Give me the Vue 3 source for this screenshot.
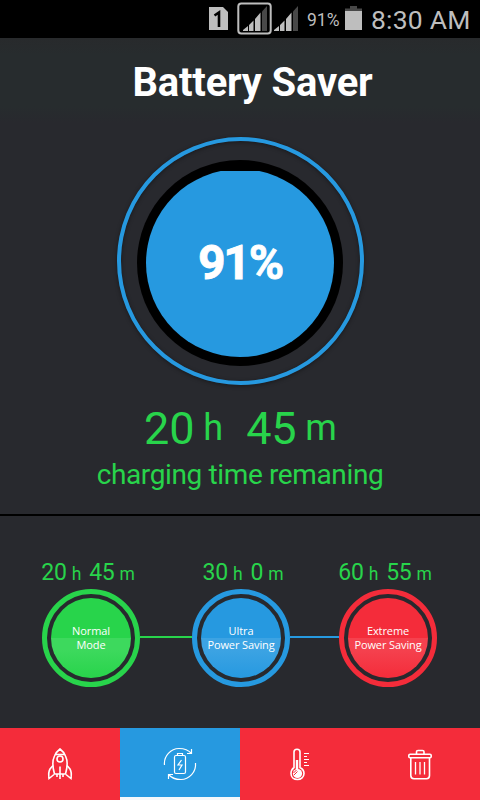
<script setup>
import { ref } from 'vue'

const level = ref(91)
const activeTab = ref('battery')

const modes = [
  { id: 'normal', hours: 20, minutes: 45, lines: ['Normal', 'Mode'] },
  { id: 'ultra', hours: 30, minutes: 0, lines: ['Ultra', 'Power Saving'] },
  { id: 'extreme', hours: 60, minutes: 55, lines: ['Extreme', 'Power Saving'] }
]

const tabs = ['boost', 'battery', 'cooler', 'junk']
</script>

<template>
  <div class="screen">
    <div class="status-bar">
      <svg class="status-icons" width="95" height="38" viewBox="0 0 95 38">
        <path d="M4 7H18L23 12V30H4Z" fill="#bebebe" />
        <path d="M9.500 15.500L14 12.500V27" fill="none" stroke="#000" stroke-width="2.600" />
        <rect x="33.300" y="3.500" width="32.400" height="30" rx="3" fill="none" stroke="#bebebe" stroke-width="2" />
        <g v-for="x in [38, 69]" :key="x" :transform="`translate(${x} 0)`">
          <path d="M0 31V30L5 26V31ZM6 25L10.500 20.500V31H6ZM12 19L17.500 12.500V31H12Z" fill="#bebebe" />
          <path d="M19 11.500L24 6V31H19Z" fill="#484848" />
        </g>
      </svg>
      <span class="status-level">{{ level }}%</span>
      <svg class="status-battery" width="17" height="38" viewBox="0 0 17 38">
        <path d="M5 6H12V8.500H17V12H0V8.500H5Z" fill="#484848" />
        <rect y="11" width="17" height="19" fill="#bebebe" />
      </svg>
      <span class="status-time">8:30 AM</span>
    </div>

    <header class="title-bar">
      <h1>Battery Saver</h1>
    </header>

    <main class="gauge">
      <div class="gauge-ring">
        <div class="gauge-well">
          <div class="gauge-fill">
            <span>{{ level }}%</span>
          </div>
        </div>
      </div>
      <div class="time-big">
        <span class="num">20</span><span class="unit unit-h">h</span>
        <span class="num num-min">45</span><span class="unit unit-m">m</span>
      </div>
      <p class="time-caption">charging time remaning</p>
    </main>

    <section class="modes">
      <template v-for="(mode, i) in modes" :key="mode.id">
        <div v-if="i > 0" class="link" :class="'link-' + modes[i - 1].id"></div>
        <div class="mode" :class="mode.id">
          <div class="mode-time">
            <span>{{ mode.hours }}</span><small class="small-h">h</small>
            <span>{{ mode.minutes }}</span><small>m</small>
          </div>
          <button class="mode-button">
            <span class="mode-disc">
              <span v-for="line in mode.lines" :key="line">{{ line }}</span>
            </span>
          </button>
        </div>
      </template>
    </section>

    <nav class="tabs">
      <button
        v-for="tab in tabs"
        :key="tab"
        class="tab"
        :class="{ active: activeTab === tab }"
        @click="activeTab = tab"
      >
        <svg v-if="tab === 'boost'" width="34" height="34" viewBox="0 0 34 34">
          <path d="M11.500 27C9.500 20 9 14 11.500 9C13 5.500 15 3.500 17 2C19 3.500 21 5.500 22.500 9C25 14 24.500 20 22.500 27Z" />
          <path d="M13 7.500H21" />
          <circle cx="17" cy="12" r="3" />
          <path d="M10 18.500L7 22C5.500 24.500 5.500 28 6 31.500L11 27.500M24 18.500L27 22C28.500 24.500 28.500 28 28 31.500L23 27.500" />
          <path d="M17 19.500V32M14 27V30M20 27V30" />
        </svg>
        <svg v-else-if="tab === 'battery'" class="thin" width="34" height="34" viewBox="0 0 34 34">
          <path d="M1.500 18C0.500 9 8 1.500 16 1.500C21 1.500 25.500 3 28.500 6.500M28.500 2V6.500H24" />
          <path d="M32.500 16C33.500 25 26 32.500 18 32.500C13 32.500 8.500 31 5.500 27.500M5.500 32V27.500H10" />
          <rect x="11.500" y="8.500" width="11" height="18" rx="1.500" />
          <path d="M14.500 8V6.500H19.500V8" />
          <path d="M18.500 13L15 18H19L16 23" />
        </svg>
        <svg v-else-if="tab === 'cooler'" width="34" height="34" viewBox="0 0 34 34">
          <path d="M11 20.500V5Q11 2.200 14 2.200Q17 2.200 17 5V20.500C20 22 21 24 21 26.500C21 30 18 32.500 14.500 32.500C10.500 32.500 8 30 8 26.500C8 24 9 22 11 20.500Z" />
          <path d="M14 13V24" stroke-width="2.400" />
          <circle cx="14.500" cy="26.500" r="4.600" fill="#fff" stroke="none" />
          <path d="M10.500 26L13.500 23M11 28L14.500 24.500" stroke="#f42c3a" stroke-width="1" />
          <path d="M21 6.500H26M21 9.500H24M21 12.500H26M21 15.500H24M21 18.500H26" stroke-width="1.100" />
        </svg>
        <svg v-else width="34" height="34" viewBox="0 0 34 34">
          <rect x="5.800" y="7.300" width="22.400" height="3.400" rx="1.300" />
          <path d="M13.500 7V4.800Q13.500 3.500 15 3.500H19.500Q21 3.500 21 4.800V7" />
          <path d="M7.800 11V28.500Q7.800 31.700 11 31.700H23.500Q26.500 31.700 26.500 28.500V11" />
          <path d="M12.500 15V27.500M17 15V27.500M21.500 15V27.500" stroke-width="1.300" />
        </svg>
      </button>
    </nav>
  </div>
</template>

<style>
body {
  margin: 0;
  background: #28292e;
}
</style>

<style scoped>
.screen {
  width: 480px;
  height: 800px;
  display: flex;
  flex-direction: column;
  overflow: hidden;
  background: #28292e;
  font-family: Roboto, 'Liberation Sans', sans-serif;
}

/* status bar */
.status-bar {
  height: 38px;
  flex: none;
  display: flex;
  align-items: center;
  justify-content: flex-end;
  padding-right: 9px;
  box-sizing: border-box;
  background: #000;
  color: #bebebe;
  white-space: nowrap;
}

.status-level {
  width: 33px;
  margin: 2px 5px 0 7px;
  font-size: 17.5px;
}

.status-time {
  width: 100px;
  margin-left: 9px;
  font-size: 26.5px;
  letter-spacing: 0.2px;
}

/* title */
.title-bar {
  height: 85px;
  flex: none;
  display: flex;
  align-items: center;
  justify-content: center;
  padding-left: 25px;
  box-sizing: border-box;
  background: linear-gradient(#282a2c, #272c2e 20%, #272c2e 80%, #28292e);
}

h1 {
  margin: 5px 0 0;
  color: #fff;
  font-size: 40px;
  line-height: 48px;
  font-weight: 700;
  letter-spacing: -0.2px;
}

/* main gauge */
.gauge {
  height: 393px;
  flex: none;
  display: flex;
  flex-direction: column;
  align-items: center;
  padding-top: 14px;
  box-sizing: border-box;
  border-bottom: 2px solid #000;
  color: #28d44b;
}

.gauge-ring {
  width: 247px;
  height: 248px;
  display: flex;
  justify-content: center;
  padding-top: 19px;
  box-sizing: border-box;
  border: 4px solid #2699e0;
  border-radius: 50%;
  box-shadow: 0 1px 4px rgba(0, 0, 0, 0.4), inset 0 1px 4px rgba(0, 0, 0, 0.4);
}

.gauge-well {
  width: 206px;
  height: 206px;
  display: flex;
  align-items: center;
  justify-content: center;
  border-radius: 50%;
  background: #000;
}

.gauge-fill {
  width: 188px;
  height: 188px;
  display: flex;
  align-items: center;
  justify-content: center;
  padding-bottom: 2px;
  box-sizing: border-box;
  border-radius: 50%;
  background: linear-gradient(#000 2.500px, #2699e0 2.500px);
  color: #fff;
  font-size: 48px;
  font-weight: 700;
  letter-spacing: -2.2px;
  -webkit-text-stroke: 0.8px #fff;
}

.time-big {
  height: 56px;
  display: flex;
  align-items: baseline;
  margin-top: 16px;
  line-height: 56px;
}

.num {
  font-size: 45px;
  letter-spacing: -0.2px;
}

.num-min {
  margin-left: 23px;
}

.unit {
  position: relative;
  top: -4px;
  margin-left: 9px;
  font-size: 36px;
}

.unit-m {
  letter-spacing: -1px;
}

.time-caption {
  margin: 0;
  font-size: 28px;
  line-height: 36px;
  letter-spacing: -0.37px;
}

/* saving modes */
.modes {
  height: 212px;
  flex: none;
  display: flex;
  align-items: flex-start;
  padding: 44px 0 0 42px;
  box-sizing: border-box;
}

.mode {
  width: 98px;
  display: flex;
  flex-direction: column;
  align-items: center;
}

.mode-time {
  height: 30px;
  display: flex;
  align-items: baseline;
  margin: -1px 0 0 -6px;
  font-size: 23px;
  line-height: 28px;
  letter-spacing: -0.2px;
  color: #28d44b;
  white-space: nowrap;
}

.ultra .mode-time {
  margin-left: 4px;
}

.mode-time small {
  margin-left: 5px;
  font-size: 17.5px;
}

.mode-time .small-h {
  margin-right: 8px;
}

.mode-button {
  width: 98px;
  height: 98px;
  display: flex;
  align-items: center;
  justify-content: center;
  padding: 0;
  border: 5px solid var(--tone);
  border-radius: 50%;
  background: none;
}

.normal {
  --tone: #28d44b;
  --shine: #3dd95d;
}

.ultra {
  --tone: #2699e0;
  --shine: #3ca3e3;
}

.extreme {
  --tone: #f42c3a;
  --shine: #f5414e;
}

.mode-disc {
  width: 80px;
  height: 80px;
  display: flex;
  flex: none;
  flex-direction: column;
  align-items: center;
  justify-content: center;
  border-radius: 50%;
  background: linear-gradient(var(--tone) 50%, var(--shine) 50%, var(--shine) 65%, var(--tone));
  color: #fff;
  font-family: 'Open Sans', 'Noto Sans', sans-serif;
  font-size: 11px;
  line-height: 14px;
  letter-spacing: -0.1px;
  white-space: nowrap;
}

.link {
  height: 2px;
  margin-top: 76px;
}

.link-normal {
  width: 52px;
  background: #28d44b;
}

.link-ultra {
  width: 49px;
  background: #2699e0;
}

/* bottom tabs */
.tabs {
  height: 72px;
  flex: none;
  display: flex;
}

.tab {
  flex: 1;
  display: flex;
  align-items: center;
  justify-content: center;
  padding: 0;
  border: none;
  background: #f42c3a;
}

.tab.active {
  padding-top: 3px;
  border-bottom: 3px solid #f4f8fb;
  background: #2699e0;
}

.tab svg {
  fill: none;
  stroke: #fff;
  stroke-width: 1.6;
}

.tab svg.thin {
  stroke-width: 1.2;
}
</style>
